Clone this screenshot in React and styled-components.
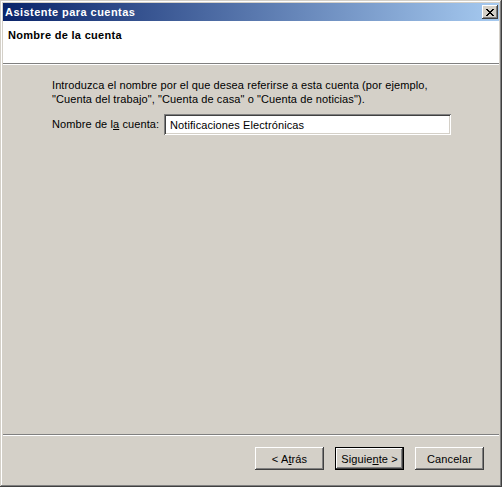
import React from "react";
import styled, { createGlobalStyle } from "styled-components";

const GlobalStyle = createGlobalStyle`
  html, body { margin: 0; padding: 0; background: #d4d0c8; }
  body { font-family: "Liberation Sans", Arial, sans-serif; font-size: 11px; }
  * { box-sizing: border-box; }
`;

const Window = styled.div`
  width: 502px;
  height: 487px;
  background: #d4d0c8;
  display: flex;
  flex-direction: column;
  padding: 3px;
  box-shadow:
    inset -1px -1px #404040,
    inset 1px 1px #d4d0c8,
    inset -2px -2px #808080,
    inset 2px 2px #ffffff;
  color: #000;
`;

const TitleBar = styled.div`
  height: 18px;
  flex: none;
  display: flex;
  align-items: center;
  justify-content: space-between;
  padding: 0 1px 0 2px;
  background: linear-gradient(to right, #0a246a, #a6caf0);
`;

const TitleText = styled.span`
  color: #fff;
  font-weight: bold;
  font-size: 11px;
  line-height: 13px;
  letter-spacing: 0.45px;
`;

const CloseButton = styled.button`
  width: 16px;
  height: 14px;
  padding: 0;
  border: none;
  background: #d4d0c8;
  display: flex;
  align-items: center;
  justify-content: center;
  box-shadow:
    inset -1px -1px #404040,
    inset 1px 1px #ffffff,
    inset -2px -2px #808080,
    inset 2px 2px #d4d0c8;
`;

const Header = styled.div`
  flex: none;
  height: 43px;
  background: #fff;
  border-bottom: 1px solid #808080;
  padding: 8px 5px 0;
`;

const HeaderTitle = styled.div`
  font-weight: bold;
  font-size: 11px;
  line-height: 13px;
  letter-spacing: 0.3px;
`;

const Body = styled.div`
  flex: 1;
  border-top: 1px solid #fff;
  padding: 13px 0 0 49px;
`;

const Intro = styled.p`
  margin: 0;
  font-size: 11px;
  line-height: 14px;
  letter-spacing: 0.1px;
  width: 420px;
`;

const FieldRow = styled.div`
  display: grid;
  grid-template-columns: 112px 287px;
  align-items: center;
  margin-top: 8px;
`;

const Label = styled.label`
  font-size: 11px;
  line-height: 13px;
  letter-spacing: 0.1px;
`;

const TextInput = styled.div`
  height: 21px;
  background: #fff;
  display: flex;
  align-items: center;
  padding: 0 6px;
  font-size: 11px;
  letter-spacing: 0.1px;
  box-shadow:
    inset 1px 1px #808080,
    inset -1px -1px #ffffff,
    inset 2px 2px #404040,
    inset -2px -2px #d4d0c8;
`;

const Footer = styled.div`
  flex: none;
  height: 50px;
  border-top: 1px solid #808080;
  box-shadow: inset 0 1px #ffffff;
  display: flex;
  justify-content: flex-end;
  gap: 11px;
  padding: 12px 15px 0 0;
`;

const Button = styled.button`
  width: 69px;
  height: 23px;
  padding: 0;
  background: #d4d0c8;
  font-family: "Liberation Sans", Arial, sans-serif;
  font-size: 11px;
  letter-spacing: 0.1px;
  color: #000;
  border: ${(p) => (p.$default ? "1px solid #000" : "none")};
  box-shadow:
    inset -1px -1px #404040,
    inset 1px 1px #ffffff,
    inset -2px -2px #808080,
    inset 2px 2px #d4d0c8;
`;

const CloseGlyph = () => (
  <svg width="8" height="7" viewBox="0 0 8 7" shapeRendering="crispEdges">
    <path
      d="M0 0h2v1h-2zM6 0h2v1h-2zM1 1h2v1h-2zM5 1h2v1h-2zM2 2h4v1h-4zM3 3h2v1h-2zM2 4h4v1h-4zM1 5h2v1h-2zM5 5h2v1h-2zM0 6h2v1h-2zM6 6h2v1h-2z"
      fill="#000"
    />
  </svg>
);

export default function App() {
  return (
    <>
      <GlobalStyle />
      <Window>
        <TitleBar>
          <TitleText>Asistente para cuentas</TitleText>
          <CloseButton aria-label="Cerrar">
            <CloseGlyph />
          </CloseButton>
        </TitleBar>
        <Header>
          <HeaderTitle>Nombre de la cuenta</HeaderTitle>
        </Header>
        <Body>
          <Intro>
            Introduzca el nombre por el que desea referirse a esta cuenta (por ejemplo,
            <br />
            "Cuenta del trabajo", "Cuenta de casa" o "Cuenta de noticias").
          </Intro>
          <FieldRow>
            <Label>
              Nombre de l<u>a</u> cuenta:
            </Label>
            <TextInput>Notificaciones Electrónicas</TextInput>
          </FieldRow>
        </Body>
        <Footer>
          <Button>
            &lt; A<u>t</u>rás
          </Button>
          <Button $default>
            Siguie<u>n</u>te &gt;
          </Button>
          <Button>Cancelar</Button>
        </Footer>
      </Window>
    </>
  );
}
